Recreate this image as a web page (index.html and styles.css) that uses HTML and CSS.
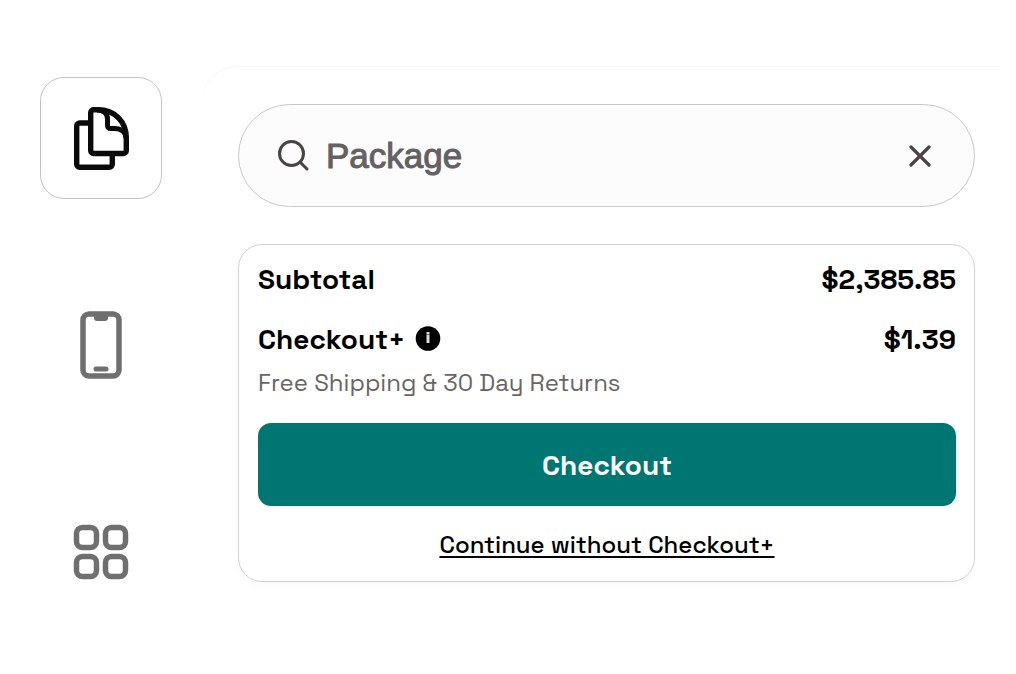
FILE: index.html
```html
<!DOCTYPE html>
<html lang="en">
<head>
    <meta charset="UTF-8">
    <meta name="viewport" content="width=device-width, initial-scale=1.0">
    <title>Package Checkout</title>
    <link rel="stylesheet" href="styles.css">
</head>
<body>
    <div class="container">
        <nav class="sidebar">
            <button class="nav-button active" type="button" aria-label="Files">
                <svg width="55" height="63" viewBox="0 0 55 63" fill="none" stroke="#0a0a0a" stroke-width="5.4" stroke-linejoin="round">
                    <path d="M16 16H5.7a3 3 0 0 0-3 3v38.3a3 3 0 0 0 3 3h29.6a3 3 0 0 0 3-3V47"/>
                    <path d="M19 2.7h5C41 2.7 52.3 15 52.3 31v12.5a3 3 0 0 1-3 3H19.7a3 3 0 0 1-3-3V5.700a3 3 0 0 1 3-3z"/>
                    <path d="M23 3c7 0 10.500 4 10.500 9v6.500a3 3 0 0 0 3 3h4c7 0 11.500 4 11.500 10" stroke-width="5"/>
                </svg>
            </button>
            <button class="nav-button" type="button" aria-label="Phone">
                <svg width="42" height="68" viewBox="0 0 42 68" fill="none" stroke="#6f6f6f">
                    <rect x="3" y="3" width="36" height="62" rx="6" stroke-width="5.5"/>
                    <path d="M14 4h14v3a3 3 0 0 1-3 3h-8a3 3 0 0 1-3-3z" fill="#6f6f6f" stroke="none"/>
                    <path d="M16 58h10" stroke-width="5" stroke-linecap="round"/>
                </svg>
            </button>
            <button class="nav-button" type="button" aria-label="Apps">
                <svg width="56" height="56" viewBox="0 0 56 56" fill="none" stroke="#6f6f6f" stroke-width="5.5">
                    <rect x="3.5" y="3.5" width="20" height="20" rx="6"/>
                    <rect x="32.5" y="3.5" width="20" height="20" rx="6"/>
                    <rect x="3.5" y="32.5" width="20" height="20" rx="6"/>
                    <rect x="32.5" y="32.5" width="20" height="20" rx="6"/>
                </svg>
            </button>
        </nav>
        <main class="panel">
            <form class="search" role="search">
                <label for="search-input" aria-label="Search">
                    <svg width="32" height="32" viewBox="0 0 32 32" fill="none" stroke="#4a4343" stroke-width="3" stroke-linecap="round">
                        <circle cx="13.5" cy="13.5" r="12"/>
                        <path d="M22 22l7 7"/>
                    </svg>
                </label>
                <input id="search-input" class="search-input" type="text" value="Package">
                <button class="search-clear" type="reset" aria-label="Clear">
                    <svg width="22" height="22" viewBox="0 0 22 22" stroke="#4a4343" stroke-width="3.2" stroke-linecap="round">
                        <path d="M2 2l18 18M20 2L2 20"/>
                    </svg>
                </button>
            </form>
            <section class="summary">
                <div class="summary-row">
                    <span>Subtotal</span>
                    <span>$2,385.85</span>
                </div>
                <div class="summary-row">
                    <span class="summary-label">Checkout+
                        <button class="info-button" type="button" aria-label="About Checkout+">
                            <svg width="26" height="26" viewBox="0 0 26 26">
                                <circle cx="13" cy="12.5" r="12.3" fill="#000"/>
                                <path d="M11.5 6h3v2h-3zM11.5 8.500h3v8.500h-3z" fill="#ddd"/>
                            </svg>
                        </button>
                    </span>
                    <span>$1.39</span>
                </div>
                <p class="summary-note">Free Shipping &amp; 30 Day Returns</p>
                <button class="checkout-button" type="button">Checkout</button>
                <a class="skip-link" href="#">Continue without Checkout+</a>
            </section>
        </main>
    </div>
</body>
</html>
```
FILE: styles.css
```css
* {
    box-sizing: border-box;
}
body {
    font-family: "Space Grotesk", Inter, sans-serif;
    margin: 0;
    background-color: #fff;
    color: #000;
}
button {
    font: inherit;
    border: none;
    background: none;
    padding: 0;
    cursor: pointer;
}
svg {
    display: block;
}
.container {
    display: flex;
    gap: 39px;
    padding: 66px 16px 40px 40px;
}
.sidebar {
    display: flex;
    flex-direction: column;
    gap: 85px;
    padding-top: 11px;
}
.nav-button {
    display: flex;
    align-items: center;
    justify-content: center;
    width: 122px;
    height: 122px;
    border-radius: 24px;
}
.nav-button.active {
    border: 1px solid #c4c4c4;
}
/* the panel outline fades out below its top corner */
.panel {
    flex: 1;
    min-width: 0;
    padding: 37px 25px 37px 36px;
    border: 1px solid transparent;
    border-right: none;
    border-radius: 36px 0 0 0;
    background: linear-gradient(#fff, #fff) padding-box, linear-gradient(#f6f6f6, #fff 34px) border-box;
}
.search {
    display: flex;
    align-items: center;
    gap: 16px;
    height: 103px;
    padding: 0 43px 0 39px;
    border: 1px solid #c8c8c8;
    border-radius: 52px;
    background-color: #fcfcfc;
}
.search-input {
    flex: 1;
    min-width: 0;
    font-family: "Liberation Sans", Arial, sans-serif;
    font-size: 35px;
    color: #636161;
    -webkit-text-stroke: 1px #636161;
    border: none;
    padding: 0;
    background: none;
    outline: none;
}
.summary {
    display: flex;
    flex-direction: column;
    margin-top: 37px;
    padding: 16px 18px 20px 19px;
    border: 1px solid #d4d0ce;
    border-radius: 24px;
    box-shadow: 0 4px 8px rgba(0, 0, 0, 0.02);
}
.summary-row {
    display: flex;
    justify-content: space-between;
    margin-bottom: 24px;
    font-size: 28px;
    font-weight: 700;
    line-height: 36px;
}
.summary-label {
    display: flex;
    align-items: center;
    gap: 10px;
}
.summary-note {
    margin: -14px 0 24px;
    font-size: 24px;
    font-weight: 400;
    line-height: 32px;
    color: #6a6464;
}
.checkout-button {
    height: 83px;
    border-radius: 13px;
    background-color: #007672;
    color: #fff;
    font-size: 28px;
    font-weight: 700;
}
.skip-link {
    align-self: center;
    margin-top: 23px;
    font-size: 24px;
    font-weight: 500;
    line-height: 32px;
    color: #000;
    text-underline-offset: 3px;
    text-decoration-thickness: 2px;
    text-decoration-skip-ink: none;
}
```
